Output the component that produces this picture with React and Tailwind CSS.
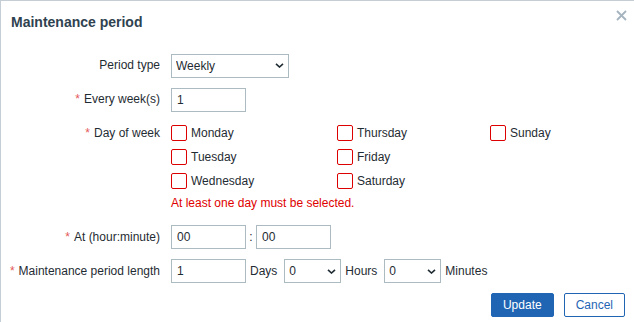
import React from "react";

const FONT = { fontFamily: '"Liberation Sans", Arial, sans-serif' };

function Chevron() {
  return (
    <svg className="absolute right-[5px] top-[10px] pointer-events-none" width="9" height="5" viewBox="0 0 9 5">
      <path d="M1 0.8 L4.5 4 L8 0.8" fill="none" stroke="#1f2c33" strokeWidth="1.6" />
    </svg>
  );
}

function Select({ value, width }) {
  return (
    <div className={`relative h-[24px] ${width}`}>
      <select
        defaultValue={value}
        className="appearance-none w-full h-full border border-[#acbbc2] bg-white pl-[4px] text-[12px] text-[#1f2c33] outline-none"
        style={FONT}
      >
        <option>{value}</option>
      </select>
      <Chevron />
    </div>
  );
}

function Input({ value }) {
  return (
    <input
      defaultValue={value}
      className="w-[75px] h-[24px] border border-[#acbbc2] bg-white px-[5px] text-[12px] text-[#1f2c33] outline-none"
      style={FONT}
    />
  );
}

function Label({ children, required }) {
  return (
    <div className="w-[160px] shrink-0 text-right pr-px h-[24px] flex items-center justify-end text-[12px] text-[#1f2c33]">
      {required && <span className="text-[#e45959] mr-[4px]">*</span>}
      {children}
    </div>
  );
}

function Day({ name }) {
  return (
    <label className="h-[24px] flex items-center">
      <span className="w-[16px] h-[16px] border border-[#dd0000] rounded-[2px] bg-white" />
      <span className="ml-[4px] text-[12px] text-[#1f2c33]">{name}</span>
    </label>
  );
}

export default function App() {
  const days = ["Monday", "Tuesday", "Wednesday", "Thursday", "Friday", "Saturday", "Sunday"];

  return (
    <div className="w-[634px] h-[322px] bg-white border-l border-t border-[#c5ced4] relative overflow-hidden" style={FONT}>
      {/* header */}
      <div className="h-[52px] pl-[10px] pt-[12px]">
        <h4 className="text-[14px] font-bold leading-[18px] text-[#2f4250]">Maintenance period</h4>
      </div>
      <button className="absolute right-[7px] top-[9px] w-[11px] h-[11px]">
        <svg width="11" height="11" viewBox="0 0 11 11">
          <path d="M1 1 L10 10 M10 1 L1 10" stroke="#a5b4bf" strokeWidth="1.8" />
        </svg>
      </button>

      {/* form */}
      <div className="flex flex-col">
        <div className="flex">
          <Label>Period type</Label>
          <div className="ml-[10px]">
            <Select value="Weekly" width="w-[118px]" />
          </div>
        </div>

        <div className="flex mt-[10px]">
          <Label required>Every week(s)</Label>
          <div className="ml-[10px]">
            <Input value="1" />
          </div>
        </div>

        <div className="flex mt-[9px]">
          <Label required>Day of week</Label>
          <div className="ml-[10px]">
            <div className="grid grid-flow-col grid-rows-3 grid-cols-[166px_153px_auto]">
              {days.map((d) => (
                <Day key={d} name={d} />
              ))}
            </div>
            <p className="mt-[3px] text-[12px] leading-[14px] text-[#e00000]">At least one day must be selected.</p>
          </div>
        </div>

        <div className="flex mt-[15px]">
          <Label required>At (hour:minute)</Label>
          <div className="ml-[10px] flex items-center">
            <Input value="00" />
            <span className="w-[10px] text-center text-[12px] text-[#1f2c33]">:</span>
            <Input value="00" />
          </div>
        </div>

        <div className="flex mt-[10px]">
          <Label required>Maintenance period length</Label>
          <div className="ml-[10px] flex items-center text-[12px] text-[#1f2c33]">
            <Input value="1" />
            <span className="ml-[4px] mr-[7px]">Days</span>
            <Select value="0" width="w-[57px]" />
            <span className="ml-[4px] mr-[7px]">Hours</span>
            <Select value="0" width="w-[57px]" />
            <span className="ml-[4px]">Minutes</span>
          </div>
        </div>

        <div className="flex justify-end gap-[10px] mt-[10px] pr-[9px]">
          <button className="h-[24px] px-[11px] border border-[#1f65b4] bg-[#1f65b4] text-white text-[12px] rounded-[2px]">
            Update
          </button>
          <button className="h-[24px] px-[11px] border border-[#1f65b4] bg-white text-[#1f65b4] text-[12px] rounded-[2px]">
            Cancel
          </button>
        </div>
      </div>
    </div>
  );
}
